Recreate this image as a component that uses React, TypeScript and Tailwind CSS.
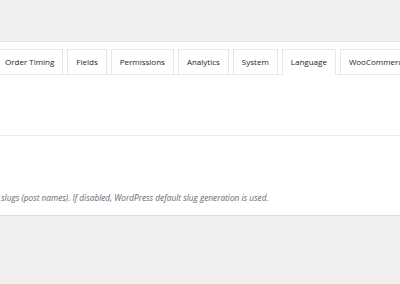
import React from 'react';

const tabs = ['Order Timing', 'Fields', 'Permissions', 'Analytics', 'System', 'Language', 'WooCommerce', 'Advanced'];

const App = () => {
  const active = 'Language';

  return (
    <div
      className="w-[400px] h-[284px] bg-[#f0f0f0] overflow-hidden"
      style={{ fontFamily: '"Open Sans", "Noto Sans", sans-serif' }}
    >
      <div className="h-[41px]" />

      {/* Settings panel */}
      <div className="bg-white border-t border-[#e4e4e4] border-b border-b-[#dcdcdc]">
        {/* Tabs */}
        <div className="pt-[7px] border-b border-[#e6e6e6]">
          <div className="flex gap-[4px] -ml-[4px] whitespace-nowrap">
            {tabs.map((tab) => (
              <div
                key={tab}
                className={`h-[26px] -mb-px px-[8px] flex items-center text-[8px] text-[#1d2327] border border-[#e6e6e6] bg-white ${
                  tab === active ? 'border-b-white' : ''
                }`}
              >
                {tab}
              </div>
            ))}
          </div>
        </div>

        <div className="h-[61px] border-b border-[#ececec]" />

        <div className="h-[79px] flex items-end pb-[11px] pl-[1px]">
          <p className="text-[8.25px] italic text-[#646970] whitespace-nowrap">
            slugs (post names). If disabled, WordPress default slug generation is used.
          </p>
        </div>
      </div>
    </div>
  );
};

export default App;
